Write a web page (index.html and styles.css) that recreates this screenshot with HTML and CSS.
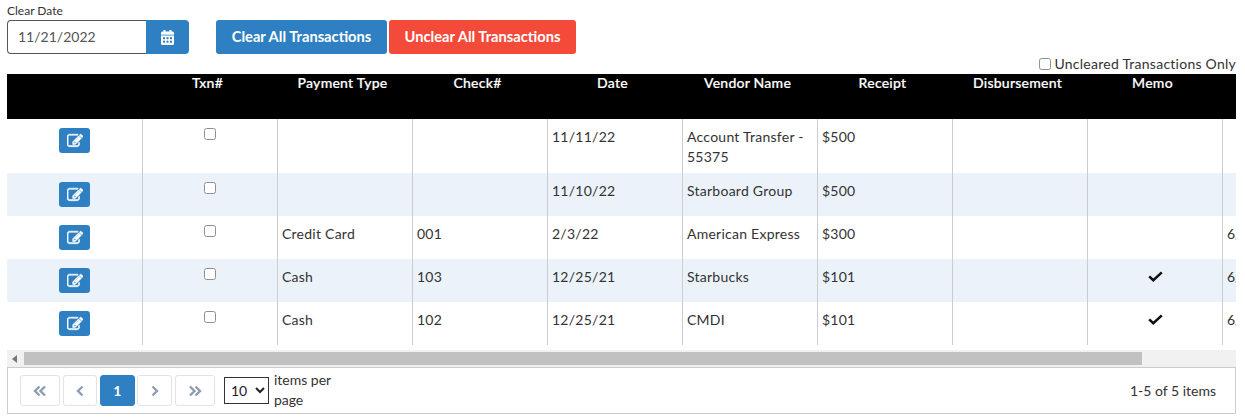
FILE: index.html
```html
<!DOCTYPE html>
<html>
<head>
    <title>Clear Transactions</title>
    <link rel="stylesheet" href="styles.css">
</head>
<body>
    <div class="toolbar">
        <div class="date-group">
            <label class="date-label">Clear Date</label>
            <div class="date-picker">
                <input class="date-input" type="text" value="11/21/2022">
                <span class="date-btn">
                    <svg class="icon-cal" viewBox="0 0 13 15">
                        <rect class="cal-body" x="0" y="1.500" width="13" height="13.500" rx="1.500"/>
                        <rect class="cal-body" x="2.500" y="0" width="2" height="3"/>
                        <rect class="cal-body" x="8.500" y="0" width="2" height="3"/>
                        <rect class="cal-mark" x="0" y="4.700" width="13" height="0.800"/>
                        <rect class="cal-mark" x="2" y="7.200" width="2" height="2"/>
                        <rect class="cal-mark" x="5.500" y="7.200" width="2" height="2"/>
                        <rect class="cal-mark" x="9" y="7.200" width="2" height="2"/>
                        <rect class="cal-mark" x="2" y="10.700" width="2" height="2"/>
                        <rect class="cal-mark" x="5.500" y="10.700" width="2" height="2"/>
                        <rect class="cal-mark" x="9" y="10.700" width="2" height="2"/>
                    </svg>
                </span>
            </div>
        </div>
        <button class="btn btn-blue" type="button">Clear All Transactions</button>
        <button class="btn btn-red" type="button">Unclear All Transactions</button>
    </div>

    <div class="filter-row">
        <label class="filter"><input type="checkbox">Uncleared Transactions Only</label>
    </div>

    <div class="grid-wrap">
        <table class="grid">
            <thead>
                <tr>
                    <th class="first"></th>
                    <th>Txn#</th>
                    <th>Payment Type</th>
                    <th>Check#</th>
                    <th>Date</th>
                    <th>Vendor Name</th>
                    <th>Receipt</th>
                    <th>Disbursement</th>
                    <th>Memo</th>
                    <th></th>
                </tr>
            </thead>
            <tbody>
                <tr>
                    <td class="center"><a class="edit"><svg viewBox="0 0 1792 1792"><path d="M888 1184l116-116-152-152-116 116v56h96v96h56zm440-720q-16-16-33 1l-350 350q-17 17-1 33t33-1l350-350q17-17 1-33zm80 594v190q0 119-84.500 203.500t-203.500 84.500h-832q-119 0-203.500-84.500t-84.500-203.500v-832q0-119 84.500-203.500t203.500-84.500h832q63 0 117 25 15 7 18 23 3 17-9 29l-49 49q-14 14-32 8-23-6-45-6h-832q-66 0-113 47t-47 113v832q0 66 47 113t113 47h832q66 0 113-47t47-113v-126q0-13 9-22l64-64q15-15 35-7t20 29zm-96-738l288 288-672 672h-288v-288zm444 132l-92 92-288-288 92-92q28-28 68-28t68 28l152 152q28 28 28 68t-28 68z"/></svg></a></td>
                    <td class="center"><input type="checkbox"></td>
                    <td></td>
                    <td></td>
                    <td>11/11/22</td>
                    <td>Account Transfer - 55375</td>
                    <td>$500</td>
                    <td></td>
                    <td></td>
                    <td></td>
                </tr>
                <tr>
                    <td class="center"><a class="edit"><svg viewBox="0 0 1792 1792"><path d="M888 1184l116-116-152-152-116 116v56h96v96h56zm440-720q-16-16-33 1l-350 350q-17 17-1 33t33-1l350-350q17-17 1-33zm80 594v190q0 119-84.500 203.500t-203.500 84.500h-832q-119 0-203.500-84.500t-84.500-203.500v-832q0-119 84.500-203.500t203.500-84.500h832q63 0 117 25 15 7 18 23 3 17-9 29l-49 49q-14 14-32 8-23-6-45-6h-832q-66 0-113 47t-47 113v832q0 66 47 113t113 47h832q66 0 113-47t47-113v-126q0-13 9-22l64-64q15-15 35-7t20 29zm-96-738l288 288-672 672h-288v-288zm444 132l-92 92-288-288 92-92q28-28 68-28t68 28l152 152q28 28 28 68t-28 68z"/></svg></a></td>
                    <td class="center"><input type="checkbox"></td>
                    <td></td>
                    <td></td>
                    <td>11/10/22</td>
                    <td>Starboard Group</td>
                    <td>$500</td>
                    <td></td>
                    <td></td>
                    <td></td>
                </tr>
                <tr>
                    <td class="center"><a class="edit"><svg viewBox="0 0 1792 1792"><path d="M888 1184l116-116-152-152-116 116v56h96v96h56zm440-720q-16-16-33 1l-350 350q-17 17-1 33t33-1l350-350q17-17 1-33zm80 594v190q0 119-84.500 203.500t-203.500 84.500h-832q-119 0-203.500-84.500t-84.500-203.500v-832q0-119 84.500-203.500t203.500-84.500h832q63 0 117 25 15 7 18 23 3 17-9 29l-49 49q-14 14-32 8-23-6-45-6h-832q-66 0-113 47t-47 113v832q0 66 47 113t113 47h832q66 0 113-47t47-113v-126q0-13 9-22l64-64q15-15 35-7t20 29zm-96-738l288 288-672 672h-288v-288zm444 132l-92 92-288-288 92-92q28-28 68-28t68 28l152 152q28 28 28 68t-28 68z"/></svg></a></td>
                    <td class="center"><input type="checkbox"></td>
                    <td>Credit Card</td>
                    <td>001</td>
                    <td>2/3/22</td>
                    <td>American Express</td>
                    <td>$300</td>
                    <td></td>
                    <td></td>
                    <td>6/30/22</td>
                </tr>
                <tr>
                    <td class="center"><a class="edit"><svg viewBox="0 0 1792 1792"><path d="M888 1184l116-116-152-152-116 116v56h96v96h56zm440-720q-16-16-33 1l-350 350q-17 17-1 33t33-1l350-350q17-17 1-33zm80 594v190q0 119-84.500 203.500t-203.500 84.500h-832q-119 0-203.500-84.500t-84.500-203.500v-832q0-119 84.500-203.500t203.500-84.500h832q63 0 117 25 15 7 18 23 3 17-9 29l-49 49q-14 14-32 8-23-6-45-6h-832q-66 0-113 47t-47 113v832q0 66 47 113t113 47h832q66 0 113-47t47-113v-126q0-13 9-22l64-64q15-15 35-7t20 29zm-96-738l288 288-672 672h-288v-288zm444 132l-92 92-288-288 92-92q28-28 68-28t68 28l152 152q28 28 28 68t-28 68z"/></svg></a></td>
                    <td class="center"><input type="checkbox"></td>
                    <td>Cash</td>
                    <td>103</td>
                    <td>12/25/21</td>
                    <td>Starbucks</td>
                    <td>$101</td>
                    <td></td>
                    <td class="center"><svg class="check" viewBox="0 0 15 11"><path d="M1.200 5.300 5.300 9.200 13.800 1.300"/></svg></td>
                    <td>6/30/22</td>
                </tr>
                <tr>
                    <td class="center"><a class="edit"><svg viewBox="0 0 1792 1792"><path d="M888 1184l116-116-152-152-116 116v56h96v96h56zm440-720q-16-16-33 1l-350 350q-17 17-1 33t33-1l350-350q17-17 1-33zm80 594v190q0 119-84.500 203.500t-203.500 84.500h-832q-119 0-203.500-84.500t-84.500-203.500v-832q0-119 84.500-203.500t203.500-84.500h832q63 0 117 25 15 7 18 23 3 17-9 29l-49 49q-14 14-32 8-23-6-45-6h-832q-66 0-113 47t-47 113v832q0 66 47 113t113 47h832q66 0 113-47t47-113v-126q0-13 9-22l64-64q15-15 35-7t20 29zm-96-738l288 288-672 672h-288v-288zm444 132l-92 92-288-288 92-92q28-28 68-28t68 28l152 152q28 28 28 68t-28 68z"/></svg></a></td>
                    <td class="center"><input type="checkbox"></td>
                    <td>Cash</td>
                    <td>102</td>
                    <td>12/25/21</td>
                    <td>CMDI</td>
                    <td>$101</td>
                    <td></td>
                    <td class="center"><svg class="check" viewBox="0 0 15 11"><path d="M1.200 5.300 5.300 9.200 13.800 1.300"/></svg></td>
                    <td>6/30/22</td>
                </tr>
            </tbody>
        </table>
    </div>

    <div class="scrollbar">
        <span class="scroll-arrow"></span>
        <div class="scroll-thumb"></div>
    </div>

    <div class="pager">
        <a class="page-btn wide"><svg viewBox="0 0 14 12"><path d="M6.500 1.500 2 6l4.500 4.500M12 1.500 7.500 6l4.500 4.500"/></svg></a>
        <a class="page-btn"><svg viewBox="0 0 14 12"><path d="M9.500 1.500 5 6l4.500 4.500"/></svg></a>
        <a class="page-btn current">1</a>
        <a class="page-btn"><svg viewBox="0 0 14 12"><path d="M4.500 1.500 9 6l-4.500 4.500"/></svg></a>
        <a class="page-btn wide"><svg viewBox="0 0 14 12"><path d="M2 1.500 6.500 6 2 10.500M7.500 1.500 12 6l-4.500 4.500"/></svg></a>
        <select class="page-size">
            <option>10</option>
        </select>
        <span class="page-size-label">items per page</span>
        <span class="page-info">1-5 of 5 items</span>
    </div>
</body>
</html>
```

FILE: styles.css
```css
* { box-sizing: border-box; }
html, body { overflow: hidden; }
body { margin: 0; padding: 5px 9px 0 7px; font-family: Lato, Arial, sans-serif; font-size: 14px; line-height: 20px; color: #333; background: #fff; }

input[type=checkbox] { appearance: none; width: 12px; height: 12px; background: #fff; border: 1px solid #8f8f8f; border-radius: 2.5px; }

.toolbar { display: flex; align-items: flex-end; height: 49px; }
.date-group { width: 182px; margin-right: 27px; }
.date-label { display: block; font-size: 12px; line-height: 12px; margin-bottom: 3px; }
.date-picker { display: flex; height: 34px; }
.date-input { width: 139px; height: 34px; padding: 0 10px 2px; border: 1px solid #555; border-right: none; border-radius: 4px 0 0 4px; font-family: inherit; font-size: 14px; color: #555; outline: none; }
.date-btn { display: flex; align-items: center; justify-content: center; width: 43px; background: #2f80c2; border-radius: 0 4px 4px 0; }
.icon-cal { width: 13px; height: 15px; }
.cal-body { fill: #fff; }
.cal-mark { fill: #2f80c2; }

.btn { height: 34px; border: none; border-radius: 3px; padding: 0 0 2px; font-family: inherit; font-size: 14.7px; font-weight: 700; color: #fff; }
.btn-blue { width: 171px; margin-right: 2px; background: #2f80c2; }
.btn-red { width: 187px; background: #f44a3a; }

.filter-row { display: flex; justify-content: flex-end; height: 20px; }
.filter { display: flex; align-items: center; letter-spacing: 0.25px; }
.filter input { margin: 0 3px 0 0; }

.grid-wrap { overflow: hidden; height: 271px; }
.grid { border-collapse: separate; border-spacing: 0; table-layout: fixed; width: 1351px; letter-spacing: 0.25px; }
.grid th { width: 135px; height: 45px; padding: 0 6px 2px 0; background: #000; color: #fff; font-weight: 500; text-align: center; vertical-align: top; line-height: 18px; -webkit-text-stroke: 0.2px; }
.grid th.first { width: 136px; }
.grid td { height: 43px; padding: 8px 4px 6px; border-right: 1px solid #ccc; vertical-align: top; }
.grid td:last-child { letter-spacing: 0; }
.grid tbody tr:nth-child(even) td { background: #ebf2fa; }
.grid td.center { text-align: center; }
.grid td input { display: block; margin: 1px auto 0; }

.edit { display: flex; align-items: center; justify-content: center; width: 31px; height: 25px; margin: 1px auto 0; background: #2f80c2; border-radius: 3px; }
.edit svg { width: 16px; height: 16px; fill: #fff; stroke: #fff; stroke-width: 60; }
.check { display: block; width: 15px; height: 11px; margin: 4px auto 0; fill: none; stroke: #111; stroke-width: 2.5; }

.scrollbar { display: flex; align-items: center; height: 17px; margin-top: 5px; background: #f1f1f1; }
.scroll-arrow { width: 0; height: 0; margin: 0 7px 0 5px; border-top: 4px solid transparent; border-bottom: 4px solid transparent; border-right: 5px solid #777; }
.scroll-thumb { width: 1118px; height: 13px; background: #c1c1c1; }

.pager { display: flex; align-items: center; height: 47px; padding: 0 19px 0 12px; border: 1px solid #ccc; }
.page-btn { display: flex; align-items: center; justify-content: center; width: 34.7px; height: 31px; margin-right: 2.7px; border: 1px solid #dde4ea; border-radius: 3px; color: #fff; font-weight: 700; }
.page-btn.wide { width: 40px; }
.page-btn svg { width: 14px; height: 12px; fill: none; stroke: #8d9db0; stroke-width: 2.4; }
.page-btn.current { background: #2f80c2; border-color: #2f80c2; }
.page-size { width: 45px; height: 27px; margin: 0 5px 0 6.4px; padding: 0 0 0 2px; border: 1px solid #333; background: #fff; font-family: inherit; font-size: 14px; color: #222; }
.page-size-label { width: 72px; margin-top: -2px; }
.page-info { margin-left: auto; }
```
